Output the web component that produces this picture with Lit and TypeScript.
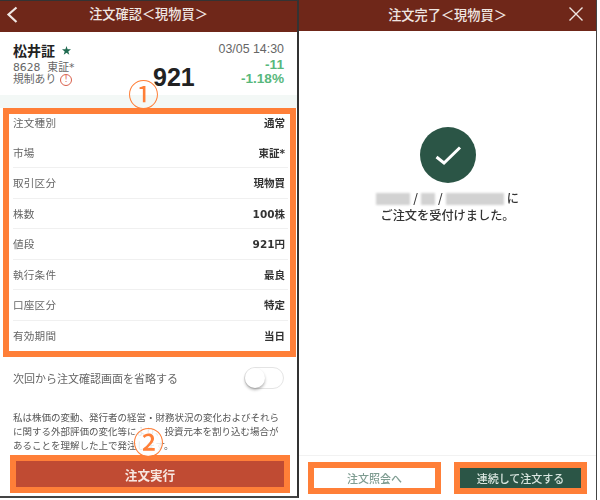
import { LitElement, html, css } from "lit";
import { customElement } from "lit/decorators.js";

const rows: [string, string][] = [
  ["注文種別", "通常"],
  ["市場", "東証*"],
  ["取引区分", "現物買"],
  ["株数", "100株"],
  ["値段", "921円"],
  ["執行条件", "最良"],
  ["口座区分", "特定"],
  ["有効期間", "当日"],
];

const blurs = [34, 14, 58];

@customElement("app-root")
export class AppRoot extends LitElement {
  static styles = css`
    :host {
      display: block;
      width: 600px;
      height: 500px;
      background: #fff;
      overflow: hidden;
      font-family: "Noto Sans CJK JP", "Liberation Sans", sans-serif;
      color: #333;
    }
    .page { display: flex; width: 600px; height: 500px; filter: blur(0.45px); }
    .panel {
      box-sizing: border-box;
      display: flex;
      flex-direction: column;
      position: relative;
      flex: none;
    }
    .left {
      width: 299px;
      height: 498px;
      border-top: 1px solid #333;
      border-right: 2px solid #333;
      border-bottom: 2px solid #444;
    }
    .right {
      width: 298px;
      height: 500px;
      border-right: 1px solid #444;
    }
    .bar {
      height: 31px;
      flex: none;
      box-sizing: border-box;
      background: #6f2719;
      color: #efe6e2;
      display: flex;
      align-items: center;
      justify-content: center;
      font-size: 13.2px;
      font-weight: 500;
      position: relative;
      padding-bottom: 6px;
    }
    .right .bar { padding-bottom: 3px; }
    .bar svg { position: absolute; }
    .back { left: 6px; top: 5px; }
    .close { right: 12px; top: 6px; }
    .quote {
      height: 63px;
      flex: none;
      box-sizing: border-box;
      padding: 9px 13px 0 13px;
      display: grid;
      grid-template-columns: 1fr auto;
      position: relative;
      background: #fff;
    }
    .name { font-size: 14px; font-weight: 700; color: #222; line-height: 18px; display: flex; align-items: center; gap: 7px; margin-bottom: 3px; }
    .star { width: 9px; height: 9px; flex: none; }
    .sub { font-family: "DejaVu Sans", "Noto Sans CJK JP", sans-serif; font-size: 10.8px; line-height: 12px; color: #666; white-space: pre; }
    .reg { display: flex; align-items: center; gap: 4px; }
    .info {
      width: 12px; height: 12px; box-sizing: border-box; border: 1px solid #d9604c;
      border-radius: 50%; color: #d9604c; font-size: 8px; line-height: 10px; text-align: center;
    }
    .price {
      position: absolute; left: 153px; top: 32px;
      font-family: "Liberation Sans", sans-serif; font-size: 25px; font-weight: 700; color: #222; line-height: 26px;
    }
    .right-q { text-align: right; font-family: "Liberation Sans", sans-serif; }
    .time { font-size: 12.4px; line-height: 16px; color: #666; margin-bottom: 1px; }
    .chg { font-size: 13.6px; line-height: 14px; color: #58b87c; font-weight: 700; }
    .band { height: 13px; flex: none; background: #f3f8f6; }
    .list {
      box-sizing: border-box;
      flex: none;
      margin: 0 1px 0 3px;
      height: 249px;
      border: 6px solid #ff7f38;
      background: #fff;
      padding: 0 2px 0 4px;
      display: flex;
      flex-direction: column;
    }
    .rows { margin-top: -7px; height: 244px; display: flex; flex-direction: column; }
    .row {
      height: 30.5px;
      flex: none;
      box-sizing: border-box;
      display: flex;
      align-items: center;
      justify-content: space-between;
      border-bottom: 1px solid #f0f0f0;
      font-size: 10.6px;
      letter-spacing: 0.2px;
      padding-right: 3px;
      color: #666;
    }
    .row:first-child, .row:last-child { border-bottom: none; }
    .row b { font-family: "DejaVu Sans", "Noto Sans CJK JP", sans-serif; font-weight: 700; color: #333; font-size: 10.5px; letter-spacing: 0; }
    .toggle-row {
      height: 42px; flex: none; box-sizing: border-box; padding: 0 13px;
      display: flex; align-items: center; justify-content: space-between;
      font-size: 11px; color: #666;
    }
    .switch {
      width: 40px; height: 22px; box-sizing: border-box; border: 1px solid #e4e4e4; border-radius: 11px;
      position: relative; background: #fff;
    }
    .knob {
      position: absolute; left: 0; top: 0; width: 20px; height: 20px; border-radius: 50%; background: #fff;
      box-shadow: 0 2px 3px rgba(0,0,0,.3);
    }
    .note {
      flex: none; height: 53px; box-sizing: border-box; padding: 11px 0 0 13px;
      font-size: 9.5px; line-height: 14px; color: #555; white-space: nowrap;
    }
    .exec {
      flex: none; box-sizing: border-box; margin: 3px 7px 0 10px; height: 38px;
      border: 6px solid #ff7f38; background: #c04b33; color: #f7e6e0;
      display: flex; align-items: center; justify-content: center;
      font-size: 12.6px; font-weight: 700;
    }
    .marker {
      position: absolute; color: #ff7f38; width: 30px; height: 30px; text-align: center;
      font-family: "Noto Sans CJK JP", sans-serif; font-weight: 400;
      line-height: 30px; font-size: 31px; border-radius: 50%;
    }
    .m1 { left: 128px; top: 77px; }
    .m2 { left: 133px; top: 425px; background: rgba(255,255,255,.85); font-weight: 500; }
    .done {
      flex: 1; display: flex; flex-direction: column; align-items: center; background: #fff;
      padding-top: 96px; box-sizing: border-box;
    }
    .check { width: 58px; height: 56px; }
    .msg {
      margin-top: 7px; font-size: 12.2px; line-height: 17px; font-weight: 500; color: #333; text-align: center;
    }
    .line { display: flex; align-items: center; justify-content: center; gap: 3px; }
    .blur { display: block; height: 12px; background: #d2d2d2; filter: blur(1px); }
    .foot {
      flex: none; height: 45px; box-sizing: border-box; border-top: 1px solid #f2f2f2;
      padding: 6px 9px 0 9px; display: flex; justify-content: space-between; align-items: flex-start;
    }
    .fbtn {
      box-sizing: border-box; width: 133px; height: 32px; border: 6px solid #ff7f38;
      display: flex; align-items: center; justify-content: center; font-size: 11px; font-weight: 500;
    }
    .ghost { background: #fff; color: #7f9d92; }
    .solid { background: #2b5546; color: #d9e6e0; }
  `;

  render() {
    return html`<div class="page">
      <section class="panel left">
        <div class="bar">
          <svg class="back" width="12" height="18" viewBox="0 0 12 18"><path d="M10.5 1.5 L2.5 8.5 L10.5 16" fill="none" stroke="#efe6e2" stroke-width="2.2"/></svg>
          注文確認＜現物買＞
        </div>
        <div class="quote">
          <div>
            <div class="name">松井証<svg class="star" viewBox="0 0 10 10"><path d="M5 0 L6.2 3.6 L10 3.7 L7 6 L8.1 9.7 L5 7.5 L1.9 9.7 L3 6 L0 3.7 L3.8 3.6 Z" fill="#1f6a50"/></svg></div>
            <div class="sub">8628  東証*</div>
            <div class="sub reg"><span>規制あり</span><span class="info">!</span></div>
          </div>
          <div class="right-q">
            <div class="time">03/05 14:30</div>
            <div class="chg">-11</div>
            <div class="chg">-1.18%</div>
          </div>
          <div class="price">921</div>
        </div>
        <div class="band"></div>
        <div class="list">
          <div class="rows">
            ${rows.map(([k, v]) => html`<div class="row"><span>${k}</span><b>${v}</b></div>`)}
          </div>
        </div>
        <div class="toggle-row">
          <span>次回から注文確認画面を省略する</span>
          <div class="switch"><div class="knob"></div></div>
        </div>
        <div class="note">私は株価の変動、発行者の経営・財務状況の変化およびそれら<br />に関する外部評価の変化等により、投資元本を割り込む場合が<br />あることを理解した上で発注します。</div>
        <div class="exec">注文実行</div>
        <div class="marker m1">①</div>
        <div class="marker m2">②</div>
      </section>
      <section class="panel right">
        <div class="bar">
          注文完了＜現物買＞
          <svg class="close" width="16" height="16" viewBox="0 0 16 16"><path d="M1.5 1.5 L14.5 14.5 M14.5 1.5 L1.5 14.5" stroke="#efe6e2" stroke-width="1.4" fill="none"/></svg>
        </div>
        <div class="done">
          <svg class="check" viewBox="0 0 58 56"><circle cx="29" cy="28" r="28" fill="#2b5546"/><path d="M17.5 30 L25 36 L41 20.5" fill="none" stroke="#fff" stroke-width="3"/></svg>
          <div class="msg">
            <div class="line">
              <span class="blur" style="width:${blurs[0]}px"></span><span>/</span><span class="blur" style="width:${blurs[1]}px"></span><span>/</span><span class="blur" style="width:${blurs[2]}px"></span><span>に</span>
            </div>
            <div>ご注文を受付けました。</div>
          </div>
        </div>
        <div class="foot">
          <div class="fbtn ghost">注文照会へ</div>
          <div class="fbtn solid">連続して注文する</div>
        </div>
      </section>
    </div>`;
  }
}
